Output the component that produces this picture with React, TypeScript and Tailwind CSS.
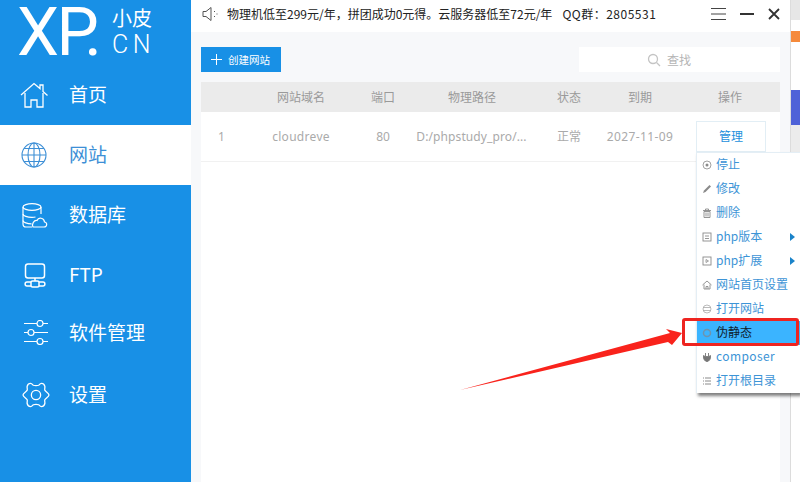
import React from "react";

const cjk = "font-['Noto_Sans_CJK_SC','Noto_Sans',sans-serif]";

function Home() {
  return (
    <svg width="28" height="26" viewBox="0 0 28 26" fill="none" stroke="currentColor" strokeWidth="1.300">
      <path d="M1 13 14 1.500l6 5V3h3v6.500l4.500 4" />
      <path d="M5 11v14h6v-7h6v7h6V11" />
    </svg>
  );
}
function Globe() {
  return (
    <svg width="26" height="26" viewBox="0 0 26 26" fill="none" stroke="currentColor" strokeWidth="1.100">
      <circle cx="13" cy="13" r="12" />
      <ellipse cx="13" cy="13" rx="6" ry="12" />
      <path d="M13 1v24M1 13h24M3 6.500h20M3 19.500h20" />
    </svg>
  );
}
function Db() {
  return (
    <svg width="26" height="25" viewBox="0 0 26 25" fill="none" stroke="currentColor" strokeWidth="1.200">
      <path d="M10 24H4c-2 0-3-1-3-3V4c0-2 4.500-3.300 9-3.300S19 2 19 4v7" />
      <path d="M1 4c0 2 4.500 3.300 9 3.300S19 6 19 4M1 11c0 2 4.500 3.300 9 3.300 1.500 0 2.500-.1 3.500-.3M1 17.500c0 2 4.500 3.300 8.500 3.300" />
      <path d="M11 24h11c3.500 0 3.500-5 .5-5-.5-4.500-6-5-7.500-1.500-3-.5-5.500 3.500-4 6.500z" />
    </svg>
  );
}
function Ftp() {
  return (
    <svg width="22" height="25" viewBox="0 0 22 25" fill="none" stroke="currentColor" strokeWidth="1.500">
      <rect x="1.500" y="1" width="19" height="14" rx="2.500" />
      <path d="M11 15v3" />
      <rect x="7" y="18" width="8" height="6" rx="1.500" />
      <path d="M7 19H3c-2.500 0-2.500 4 0 4h4M15 19h4c2.500 0 2.500 4 0 4h-4" />
    </svg>
  );
}
function Sliders() {
  return (
    <svg width="24" height="25" viewBox="0 0 24 25" fill="none" stroke="currentColor" strokeWidth="1.200">
      <path d="M0 3.500h13M19 3.500h5M0 12.500h4M10 12.500h14M0 21.500h13M19 21.500h5" />
      <circle cx="16" cy="3.500" r="3" />
      <circle cx="7" cy="12.500" r="3" />
      <circle cx="16" cy="21.500" r="3" />
    </svg>
  );
}
function Gear() {
  return (
    <svg width="28" height="26" viewBox="0 0 30 28" fill="none" stroke="currentColor" strokeWidth="1.400">
      <path d="M9 1.500c1.500 0 2.500 1.500 3 2 2 .6 4 .6 6 0 .5-.5 1.500-2 3-2 1.500 0 3 1.500 3.500 3 .4 1.500-.5 3 0 4.500.5 1.300 4.500 3.200 4.500 5s-4 3.700-4.500 5c-.5 1.500.4 3 0 4.500-.5 1.500-2 3-3.500 3s-2.500-1.500-3-2c-2-.6-4-.6-6 0-.5.500-1.500 2-3 2s-3-1.500-3.500-3c-.4-1.500.5-3 0-4.500C5 17.700 1 15.800 1 14s4-3.700 4.500-5c.5-1.500-.4-3 0-4.500C6 3 7.500 1.500 9 1.500z" />
      <circle cx="15" cy="14" r="5" />
    </svg>
  );
}

function NavItem({ icon, label, active, h, iconClass }: { icon: React.ReactNode; label: string; active?: boolean; h: string; iconClass: string }) {
  return (
    <div className={`flex items-center ${h} ${active ? "bg-white text-[#3d8fd6]" : "text-white"}`}>
      <div className={`w-[69px] flex ${iconClass}`}>{icon}</div>
      <span className="text-[19px] leading-none pb-[3px]">{label}</span>
    </div>
  );
}

function MenuIcon({ children }: { children: React.ReactNode }) {
  return (
    <svg width="10" height="10" viewBox="0 0 10 10" fill="none" stroke="#8a8a8a" strokeWidth="1.200" className="shrink-0">
      {children}
    </svg>
  );
}

function MenuItem({ icon, label, arrow, active, wide }: { icon: React.ReactNode; label: string; arrow?: boolean; active?: boolean; wide?: boolean }) {
  return (
    <div className={`relative flex items-center h-6 pl-[2px] ${active ? "bg-[#3bb4ff] text-[#10202c]" : "text-[#3d94d6]"}`}>
      <div className="w-4 flex justify-center">{icon}</div>
      <span className={`ml-[1px] pb-[2px] text-[12px] whitespace-nowrap ${wide ? "tracking-[0.4px]" : ""}`}>{label}</span>
      {arrow && <span className="absolute right-[5px] w-0 h-0 border-y-[4.500px] border-y-transparent border-l-[5px] border-l-[#1a83c9]" />}
    </div>
  );
}

const cols = "grid grid-cols-[49px_102px_62px_116px_68px_84px_96px] items-center";

export default function App() {
  return (
    <div className={`relative flex w-[800px] h-[482px] overflow-hidden bg-white ${cjk}`}>
      <aside className="w-[191px] shrink-0 bg-[#1890e6] flex flex-col">
        <div className="h-[65px] flex items-start text-white">
          <span className="ml-[17px] w-[95px] mt-[2px] text-[67px] leading-[60px] whitespace-nowrap font-['Roboto',sans-serif]">
            <span className="tracking-[-2.500px]">X</span>
            <span className="tracking-[-14.500px]">P</span>.
          </span>
          <div className="flex flex-col">
            <span className="mt-[5px] text-[20px] leading-[26px]">小皮</span>
            <span className="text-[25px] leading-[28px] tracking-[4.500px] font-['Roboto',sans-serif] font-light">CN</span>
          </div>
        </div>
        <NavItem h="h-[60px]" iconClass="pl-[20px]" icon={<Home />} label="首页" />
        <NavItem h="h-[60px]" active iconClass="pl-[21px]" icon={<Globe />} label="网站" />
        <NavItem h="h-[60px]" iconClass="pl-[22px]" icon={<Db />} label="数据库" />
        <NavItem h="h-[60px]" iconClass="pl-[24px]" icon={<Ftp />} label="FTP" />
        <NavItem h="h-[55px]" iconClass="pl-[24px]" icon={<Sliders />} label="软件管理" />
        <NavItem h="h-[70px]" iconClass="pl-[22px]" icon={<Gear />} label="设置" />
      </aside>

      <main className="w-[599px] shrink-0 flex flex-col">
        <header className="h-[32px] flex items-center bg-white pl-[11px] pb-[4px] text-[12px] text-[#222]">
          <svg width="16" height="16" viewBox="0 0 16 16" fill="none" stroke="#555" strokeWidth="1" className="shrink-0">
            <path d="M1 5.500h3L9 1.500v13L4 10.500H1zM12 5l1 1M12 11l1-1M14.500 8h1" />
          </svg>
          <span className="ml-[9px] whitespace-nowrap">物理机低至299元/年，拼团成功0元得。云服务器低至72元/年</span>
          <span className="ml-[10px] whitespace-nowrap tracking-[0.5px]">QQ群：2805531</span>
          <div className="ml-auto flex items-center gap-[14px] pr-[10px] text-[#333]">
            <svg width="15" height="12" viewBox="0 0 15 12" stroke="#444" strokeWidth="1"><path d="M0 .5h15M0 6h15M0 11.500h15" /></svg>
            <svg width="14" height="12" viewBox="0 0 14 12" stroke="#333" strokeWidth="2"><path d="M0 6h14" /></svg>
            <svg width="12" height="12" viewBox="0 0 12 12" stroke="#333" strokeWidth="1.800"><path d="M1 1l10 10M11 1 1 11" /></svg>
          </div>
        </header>

        <div className="flex-1 flex flex-col bg-[#f7f8fa] px-[10px] pt-[15px]">
          <div className="flex items-center justify-between h-[25px]">
            <button className="w-[80px] h-[25px] bg-[#1890e6] text-white text-[10.500px] flex items-center">
              <svg width="11" height="11" viewBox="0 0 11 11" stroke="#fff" strokeWidth="1" className="ml-[10px]"><path d="M5.500 0v11M0 5.500h11" /></svg>
              <span className="ml-[6px]">创建网站</span>
            </button>
            <div className="w-[201px] h-[25px] bg-white flex items-center pl-[68px] text-[12px] text-[#b5b5b5]">
              <svg width="14" height="14" viewBox="0 0 14 14" fill="none" stroke="#c4c4c4" strokeWidth="1.300" className="mr-[6px]">
                <circle cx="6" cy="6" r="4.500" /><path d="m9.500 9.500 3.500 3.500" />
              </svg>
              <span>查找</span>
            </div>
          </div>

          <div className="mt-[10px] bg-white flex-1 text-[12px]">
            <div className={`${cols} h-[30px] bg-[#ebebeb] text-[#9a9a9a] text-center`}>
              <div />
              <div>网站域名</div>
              <div>端口</div>
              <div>物理路径</div>
              <div className="pl-[10px]">状态</div>
              <div>到期</div>
              <div>操作</div>
            </div>
            <div className={`${cols} h-[50px] text-[#aaa] text-center border-b border-[#f1f1f1] font-['Noto_Sans','Noto_Sans_CJK_SC',sans-serif]`}>
              <div className="text-left pl-[17px]">1</div>
              <div className="tracking-[0.3px]">cloudreve</div>
              <div>80</div>
              <div className="whitespace-nowrap tracking-[0.1px] pr-[1px]">D:/phpstudy_pro/...</div>
              <div className="pl-[10px]">正常</div>
              <div className="whitespace-nowrap tracking-[0.4px]">2027-11-09</div>
              <div className="w-[70px] h-[31px] ml-[14px] border border-[#e2eef5] flex items-center justify-center text-[#2390dc] bg-white">管理</div>
            </div>
          </div>
        </div>
      </main>

      <div className="w-[10px] shrink-0 flex flex-col border-l border-[#dcdcdc] bg-white">
        <div className="h-[20px] bg-[#e6e6e6]" />
        <div className="h-[11px]" />
        <div className="h-[11px] bg-[#f58a3c]" />
        <div className="h-[48px]" />
        <div className="h-[35px] bg-[#4e62d8]" />
        <div className="h-[28px] bg-[#ececec]" />
      </div>

      <div className="absolute left-[696px] top-[152px] w-[104px] h-[241px] bg-white border-l border-t border-[#e4eef5] shadow-[2px_3px_3px_rgba(0,0,0,0.5)]">
        <MenuItem label="停止" icon={<MenuIcon><circle cx="5" cy="5" r="4" strokeWidth="0.800" /><circle cx="5" cy="5" r="1.500" fill="#8a8a8a" stroke="none" /></MenuIcon>} />
        <MenuItem label="修改" icon={<MenuIcon><path d="M1 9l1-2.500L7.500 1 9 2.500 3.500 8z" fill="#8a8a8a" stroke="none" /></MenuIcon>} />
        <MenuItem label="删除" icon={<MenuIcon><path d="M1 2.500h8M3.500 2.500V1h3v1.500M2 3.500h6v6H2zM4 4.500v4M6 4.500v4" strokeWidth="0.900" /></MenuIcon>} />
        <MenuItem arrow label="php版本" icon={<MenuIcon><rect x="1" y="1" width="8" height="8" strokeWidth="0.900" /><path d="M3 4h4M3 6.500h4" strokeWidth="0.900" /></MenuIcon>} />
        <MenuItem arrow label="php扩展" icon={<MenuIcon><rect x="1" y="1" width="8" height="8" strokeWidth="0.900" /><path d="M4 3.500 6.500 5 4 6.500z" strokeWidth="0.800" /></MenuIcon>} />
        <MenuItem label="网站首页设置" icon={<MenuIcon><path d="M.5 5 5 1l4.500 4M2 4.500V9h6V4.500M4 9V6.500h2V9" strokeWidth="0.900" /></MenuIcon>} />
        <MenuItem label="打开网站" icon={<MenuIcon><circle cx="5" cy="5" r="4" strokeWidth="0.800" stroke="#aaa" /><path d="M1 3.500h8M1 6.500h8" strokeWidth="0.800" stroke="#aaa" /></MenuIcon>} />
        <MenuItem active label="伪静态" icon={<MenuIcon><circle cx="5" cy="5" r="3.500" stroke="#6f93ad" strokeWidth="1.500" /></MenuIcon>} />
        <MenuItem wide label="composer" icon={<MenuIcon><path d="M1.500 3.500C1 7 3 9.500 5 9.500s4-2.500 3.500-6C7.500 5 2.500 5 1.500 3.500zM3.500 1v3M6.500 1v3" fill="#777" stroke="#777" strokeWidth="0.900" /></MenuIcon>} />
        <MenuItem label="打开根目录" icon={<MenuIcon><path d="M1 2h1M3 2h6M1 5h1M3 5h6M1 8h1M3 8h6" strokeWidth="1" /></MenuIcon>} />
      </div>

      <div className="absolute left-[682px] top-[318px] w-[117px] h-[28px] rounded-[3px] border-[3px] border-[#ee2420]" />

      <svg className="absolute left-[455px] top-[325px]" width="232" height="70" viewBox="455 325 232 70" fill="#f9231c">
        <path d="M460 390 670 333 666 329 682 333 672 345 668 342z" />
      </svg>
    </div>
  );
}
